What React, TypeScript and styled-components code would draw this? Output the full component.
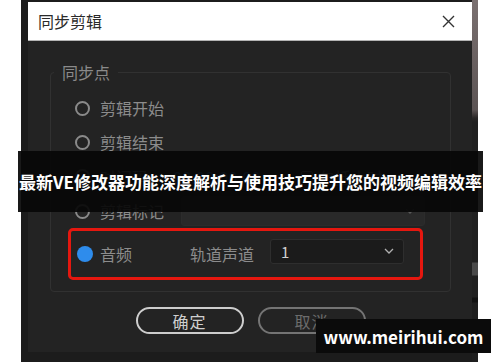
import React from "react";
import styled, { createGlobalStyle } from "styled-components";

const Global = createGlobalStyle`
  html, body { margin: 0; padding: 0; background: #ffffff; }
  body { font-family: "Noto Sans CJK SC", "Noto Sans", sans-serif; }
  * { box-sizing: border-box; }
`;

const Stage = styled.div`
  position: relative;
  width: 500px;
  height: 362px;
  overflow: hidden;
  background: #ffffff;
`;

const Frame = styled.div`
  margin-left: 21px;
  width: 457px;
  height: 362px;
  display: flex;
  align-items: flex-start;
  padding-top: 2px;
  padding-left: 7px;
  background: #1c1c1c;
`;

const SideStrip = styled.div`
  width: 6px;
  height: 362px;
  margin-top: -2px;
  flex: none;
  background: linear-gradient(
    to bottom,
    #7a7070 0px,
    #5c5454 110px,
    #2a2727 118px,
    #202020 122px,
    #202020 262px,
    #4a4a4a 263px,
    #4a4a4a 275px,
    #202020 276px,
    #202020 297px,
    #111111 298px,
    #111111 302px,
    #1e1e1e 303px
  );
`;

const Dialog = styled.div`
  width: 444px;
  height: 350px;
  flex: none;
  display: flex;
  flex-direction: column;
  background: #232323;
`;

const TitleBar = styled.div`
  height: 39px;
  flex: none;
  display: flex;
  align-items: center;
  justify-content: space-between;
  padding: 0 17px 0 10px;
  background: #ffffff;
  border-bottom: 1px solid #b4b4b4;
`;

const Title = styled.span`
  font-size: 16px;
  line-height: 1;
  color: #2a2a2a;
`;

const CloseIcon = styled.svg`
  width: 13px;
  height: 13px;
  display: block;
`;

const Body = styled.div`
  flex: 1;
  display: flex;
  flex-direction: column;
  padding: 20px 21px 0 22px;
`;

const Group = styled.fieldset`
  margin: 0;
  padding: 8px 0 11px 0;
  min-inline-size: 0;
  border: 1px solid #313131;
  border-radius: 4px;
  display: flex;
  flex-direction: column;
`;

const Legend = styled.legend`
  margin-left: 3px;
  padding: 0 8px;
  font-size: 16px;
  line-height: 22px;
  color: #8a8a8a;
`;

const OptionRow = styled.div<{ $h: number }>`
  height: ${(p) => p.$h}px;
  display: flex;
  align-items: center;
  padding-left: 24px;
`;

const Radio = styled.span`
  width: 15px;
  height: 15px;
  flex: none;
  border-radius: 50%;
  border: 2.5px solid #8a8a8a;
  margin-right: 10px;
`;

const Label = styled.span<{ $ml?: number; $color?: string }>`
  font-size: 16px;
  line-height: 22px;
  color: ${(p) => p.$color ?? "#8c8c8c"};
  margin-left: ${(p) => p.$ml ?? 0}px;
  white-space: nowrap;
`;

const Timecode = styled.span`
  margin-left: 25px;
  font-size: 16px;
  line-height: 22px;
  color: #2d8ceb;
  letter-spacing: 0.3px;
`;

const CheckBox = styled.span`
  width: 12px;
  height: 12px;
  margin-left: 40px;
  margin-right: 6px;
  border: 1.5px solid #8a8a8a;
  border-radius: 2px;
  flex: none;
`;

const Select = styled.div<{ $ml: number; $w: number; $h: number; $bg: string; $border: string; $lift?: number }>`
  margin-left: ${(p) => p.$ml}px;
  margin-bottom: ${(p) => p.$lift ?? 0}px;
  width: ${(p) => p.$w}px;
  height: ${(p) => p.$h}px;
  flex: none;
  display: flex;
  align-items: center;
  justify-content: space-between;
  padding: 0 9px 0 10px;
  background: ${(p) => p.$bg};
  border: 1px solid ${(p) => p.$border};
  border-radius: 3px;
`;

const SelectValue = styled.span`
  font-size: 15px;
  line-height: 1;
  color: #d2d2d2;
`;

const Chevron = styled.svg`
  width: 10px;
  height: 6px;
  display: block;
`;

const Highlight = styled.div`
  margin-left: 17px;
  width: 355px;
  height: 52px;
  display: flex;
  align-items: center;
  padding-left: 6px;
  border: 3px solid #e5170f;
  border-radius: 5px;
`;

const FilledRadio = styled.span`
  width: 16px;
  height: 16px;
  flex: none;
  border-radius: 50%;
  background: #2e8cec;
  margin-right: 7px;
`;

const ButtonRow = styled.div`
  margin-top: 15px;
  display: flex;
  justify-content: center;
  gap: 14px;
`;

const PillButton = styled.button<{ $muted?: boolean }>`
  width: 108px;
  height: 27px;
  padding: 0;
  border-radius: 14px;
  background: transparent;
  border: 2px solid ${(p) => (p.$muted ? "#747474" : "#cdcdcd")};
  color: ${(p) => (p.$muted ? "#6c6c6c" : "#cfcfcf")};
  font-family: "Noto Sans CJK SC", "Noto Sans", sans-serif;
  font-size: 16px;
  line-height: 1;
  letter-spacing: 1px;
`;

const Banner = styled.div`
  position: absolute;
  left: 18px;
  top: 151px;
  height: 61px;
  display: flex;
  align-items: center;
  padding: 0 1px;
  background: rgba(8, 8, 8, 0.93);
  color: #ffffff;
  font-family: "Noto Sans CJK SC", "Noto Sans", sans-serif;
  font-weight: 700;
  font-size: 17px;
  white-space: nowrap;
`;

const Watermark = styled.div`
  position: absolute;
  left: 316px;
  top: 319px;
  width: 175px;
  height: 34px;
  display: flex;
  align-items: center;
  justify-content: center;
  background: #0b0b0b;
  color: #ffffff;
  font-family: "Noto Sans CJK SC", "Noto Sans", sans-serif;
  font-weight: 700;
  font-size: 17px;
`;

function ChevronDown({ color }: { color: string }) {
  return (
    <Chevron viewBox="0 0 10 6">
      <path d="M1 1 L5 5 L9 1" fill="none" stroke={color} strokeWidth="1.3" />
    </Chevron>
  );
}

export default function App() {
  return (
    <>
      <Global />
      <Stage>
        <Frame>
          <Dialog>
            <TitleBar>
              <Title>同步剪辑</Title>
              <CloseIcon viewBox="0 0 13 13">
                <path d="M1 1 L12 12 M12 1 L1 12" stroke="#333" strokeWidth="1.4" />
              </CloseIcon>
            </TitleBar>
            <Body>
              <Group>
                <Legend>同步点</Legend>
                <OptionRow $h={34}>
                  <Radio />
                  <Label>剪辑开始</Label>
                </OptionRow>
                <OptionRow $h={34}>
                  <Radio />
                  <Label>剪辑结束</Label>
                </OptionRow>
                <OptionRow $h={35}>
                  <Radio />
                  <Label>时间码</Label>
                  <Timecode>00:00:00:00</Timecode>
                  <CheckBox />
                  <Label>包括小时</Label>
                </OptionRow>
                <OptionRow $h={34}>
                  <Radio />
                  <Label>剪辑标记</Label>
                  <Select $ml={17} $w={244} $h={30} $bg="#292929" $border="#2c2c2c">
                    <SelectValue />
                    <ChevronDown color="#5a5a5a" />
                  </Select>
                </OptionRow>
                <Highlight>
                  <FilledRadio />
                  <Label>音频</Label>
                  <Label $ml={58}>轨道声道</Label>
                  <Select $ml={16} $w={134} $h={25} $bg="#1b1b1b" $border="#2e2e2e" $lift={6}>
                    <SelectValue>1</SelectValue>
                    <ChevronDown color="#b0b0b0" />
                  </Select>
                </Highlight>
              </Group>
              <ButtonRow>
                <PillButton>确定</PillButton>
                <PillButton $muted>取消</PillButton>
              </ButtonRow>
            </Body>
          </Dialog>
          <SideStrip />
        </Frame>
        <Banner>最新VE修改器功能深度解析与使用技巧提升您的视频编辑效率</Banner>
        <Watermark>www.meirihui.com</Watermark>
      </Stage>
    </>
  );
}
